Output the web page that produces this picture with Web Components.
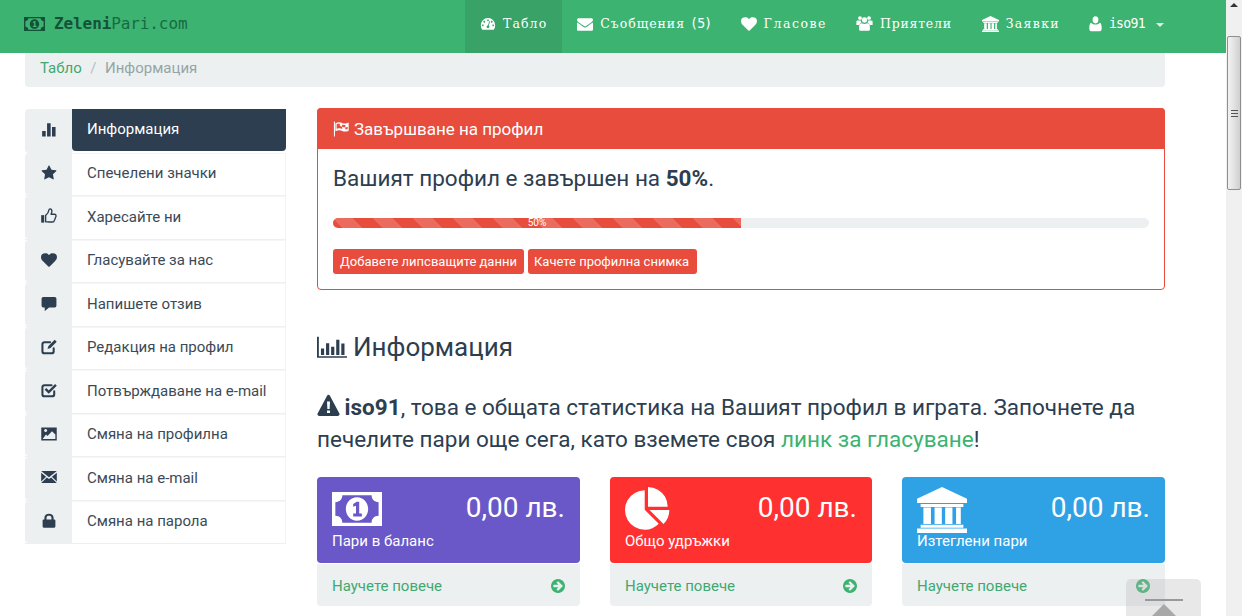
<!DOCTYPE html>
<html lang="bg"><head><meta charset="utf-8"><title>ZeleniPari</title>
<style>
html,body{margin:0;padding:0;height:616px;overflow:hidden;background:#fff}
body{font-family:Roboto,"Liberation Sans",sans-serif;color:#2c3e50}
</style></head><body>
<zp-app>
  <zp-navbar slot="nav"></zp-navbar>
  <zp-breadcrumb></zp-breadcrumb>
  <zp-layout>
    <zp-sidebar slot="side">
      <zp-side-item icon="bars" active>Информация</zp-side-item>
      <zp-side-item icon="star">Спечелени значки</zp-side-item>
      <zp-side-item icon="thumb">Харесайте ни</zp-side-item>
      <zp-side-item icon="heart">Гласувайте за нас</zp-side-item>
      <zp-side-item icon="comment">Напишете отзив</zp-side-item>
      <zp-side-item icon="edit">Редакция на профил</zp-side-item>
      <zp-side-item icon="check">Потвърждаване на e-mail</zp-side-item>
      <zp-side-item icon="picture">Смяна на профилна</zp-side-item>
      <zp-side-item icon="mail">Смяна на e-mail</zp-side-item>
      <zp-side-item icon="lock">Смяна на парола</zp-side-item>
    </zp-sidebar>
    <zp-profile-panel></zp-profile-panel>
    <zp-heading></zp-heading>
    <zp-intro></zp-intro>
    <zp-stats>
      <zp-stat-card color="#6a58c8" icon="money" iw="50" ih="34" it="5" label="Пари в баланс"></zp-stat-card>
      <zp-stat-card color="#ff3030" icon="pie" iw="46" ih="46" it="0" label="Общо удръжки"></zp-stat-card>
      <zp-stat-card color="#2fa2e6" icon="bank" iw="50" ih="46" it="0" label="Изтеглени пари"></zp-stat-card>
    </zp-stats>
  </zp-layout>
  <zp-scrollbar slot="bar"></zp-scrollbar>
  <zp-backtop slot="over"></zp-backtop>
</zp-app>
<script>
const ICONS={
 gauge:`<path fill-rule="evenodd" d="M896 224C452 224 96 600 96 1050c0 170 50 330 140 466 12 18 30 28 52 28h1216c22 0 40-10 52-28 90-136 140-296 140-466 0-450-356-826-800-826zM896 384a96 96 0 1 1-.1 0zM480 544a96 96 0 1 1-.1 0zM320 960a96 96 0 1 1-.1 0zM1472 960a96 96 0 1 1-.1 0zM1312 544a96 96 0 1 1-.1 0zM1130 620l-150 440c50 40 72 90 72 140 0 90-70 160-156 160s-156-70-156-160c0-86 66-156 150-160l152-448z"/>`,
 envelope:`<path d="M1792 710v794q0 66-47 113t-113 47h-1472q-66 0-113-47t-47-113v-794q44 49 101 87 362 246 497 345 57 42 92.5 65.5t94.5 48 110 24.5h2q51 0 110-24.5t94.5-48 92.5-65.5q170-123 498-345 57-39 100-87zm0-294q0 79-49 151t-122 123q-376 261-468 325-10 7-42.5 30.5t-54 38-52 32.5-57.5 27-50 9h-2q-23 0-50-9t-57.5-27-52-32.5-54-38-42.5-30.5q-91-64-262-182.5t-205-142.5q-62-42-117-115.5t-55-136.5q0-78 41.5-130t118.5-52h1472q65 0 112.5 47t47.5 113z"/>`,
 heart:`<path d="M896 1664q-26 0-44-18l-624-602q-10-8-27.5-26t-55.5-65.5-68-97.5-53.5-121-23.5-138q0-220 127-344t351-124q62 0 126.5 21.5t120 58 95.5 68.5 76 68q36-36 76-68t95.5-68.5 120-58 126.5-21.5q224 0 351 124t127 344q0 221-229 450l-623 600q-18 18-44 18z"/>`,
 users:`<rect x="230" y="130" width="380" height="380" rx="170"/><rect x="1182" y="130" width="380" height="380" rx="170"/><rect x="620" y="250" width="552" height="560" rx="260"/><path d="M40 1050V720q0-130 130-130h320q10 110 90 210-180 60-240 250zM1752 1050V720q0-130-130-130h-320q-10 110-90 210 180 60 240 250z"/><path d="M330 1540v-340c0-210 130-320 300-320 70 50 170 70 266 70s196-20 266-70c170 0 300 110 300 320v340q0 130-130 130H460q-130 0-130-130z"/>`,
 bank:`<path d="M896 128 1792 528v140H0V528z"/><path d="M130 700h1532v100H130z"/><path d="M230 820h270v560H230zM630 820h260v560H630zM1010 820h260v560h-260zM1400 820h170v560h-170z"/><path d="M130 1400h1532v100H130zM0 1530h1792v150H0z"/>`,
 user:`<circle cx="896" cy="430" r="400"/><path d="M300 760c120 130 280 200 596 200s476-70 596-200c180 40 260 280 260 620 0 220-90 340-260 340H300c-170 0-260-120-260-340 0-340 80-580 260-620z"/>`,
 bars:`<path d="M128 1000h400v620H128zM680 128h400v1492H680zM1232 560h400v1060h-400z"/>`,
 chart:`<path d="M0 192h110v1340h1682v110H0z"/><path d="M256 1000h190v440H256zM560 640h190v800H560zM864 880h190v560H864zM1168 400h190v1040h-190zM1472 660h190v780h-190z" transform="translate(-20 0)"/>`,
 star:`<path d="M1728 647q0 22-26 48l-363 354 86 500q1 7 1 20 0 21-10.5 35.5t-30.5 14.5q-19 0-40-12l-449-236-449 236q-22 12-40 12-21 0-31.5-14.5t-10.5-35.5q0-6 2-20l86-500-364-354q-25-27-25-48 0-37 56-46l502-73 225-455q19-41 49-41t49 41l225 455 502 73q56 9 56 46z"/>`,
 thumb:`<path d="M20 800h340v840H20z"/><path fill="none" stroke="currentColor" stroke-width="150" stroke-linejoin="round" d="M520 1540V830c170-110 330-340 370-610 10-70 50-120 120-120 130 0 210 130 210 260 0 130-60 240-100 340h370c120 0 200 70 200 190 0 60-30 120-70 150 20 70 0 140-60 180 10 80-20 140-80 180 0 100-90 170-200 170H890c-110 0-260-20-370-20z"/>`,
 comment:`<path d="M256 224h1280q192 0 192 190v800q0 190-192 190H900l-480 400v-400H256q-192 0-192-190V414q0-190 192-190z"/>`,
 edit:`<path fill="none" stroke="currentColor" stroke-width="230" stroke-linejoin="round" stroke-linecap="round" d="M1420 1040v320q0 240-240 240H400q-240 0-240-240V600q0-240 240-240h620"/><path d="M1530 90l230 230-690 690-340 100 100-340z"/>`,
 check:`<path fill="none" stroke="currentColor" stroke-width="230" stroke-linejoin="round" stroke-linecap="round" d="M1480 1040v320q0 240-240 240H400q-240 0-240-240V600q0-240 240-240h780"/><path fill="none" stroke="currentColor" stroke-width="270" d="M500 760l370 370 800-800"/>`,
 picture:`<path fill-rule="evenodd" d="M30 180h1732v1432H30zM520 330a170 170 0 1 0 .1 0zM180 1460h1430V950l-380-360-500 540-170-170z"/>`,
 mail:`<path d="M20 230h1752L896 930zM20 420v970l550-510zM1772 420v970l-550-510zM660 950l236 180 236-180 640 610H20z"/>`,
 lock:`<path fill-rule="evenodd" d="M380 720V520C380 230 620 80 896 80s516 150 516 440v200h70q130 0 130 130v660q0 130-130 130H310q-130 0-130-130V850q0-130 130-130zM620 720h552V520c0-130-120-200-276-200S620 390 620 520z"/>`,
 flag:`<path d="M190 160h110v1480H190z"/><path fill-rule="evenodd" d="M340 330c260-150 480-130 680-40 200 90 340 90 640-30v800c-300 120-440 120-640 30-200-90-420-110-680 40zM460 420v220c120-60 220-60 320-40V380c-110-20-210-10-320 40zM780 600v230c80 10 150 40 230 70V680c-80-30-150-70-230-80zM1010 440v240c120 50 240 60 320 40V490c-100 10-210-10-320-50zM1330 720v230c90-10 170-40 230-60V660c-70 30-150 50-230 60zM460 640v240c100-50 210-70 320-50V600c-110-10-220-20-320 40z"/>`,
 warn:`<path fill-rule="evenodd" d="M896 128c50 0 90 30 110 70l740 1340c40 80-10 170-110 170H156c-100 0-150-90-110-170L786 198c20-40 60-70 110-70zM780 640l30 560h172l30-560zM780 1300v190h232v-190z"/>`,
 money:`<path fill-rule="evenodd" d="M0 0h1792v1240H0zM120 370v500c150 0 250 100 250 250h1050c0-150 100-250 250-250V370c-150 0-250-100-250-250H370c0 150-100 250-250 250zM896 190c230 0 400 200 400 430s-170 430-400 430-400-200-400-430 170-430 400-430zM760 780v110h310V780h-95V360h-90L760 440v100l100-40v280z"/>`,
 pie:`<path d="M768 890l546 546q-106 108-247.5 168t-298.5 60q-209 0-385.5-103t-279.5-279.5-103-385.5 103-385.5 279.5-279.5 385.5-103v762zm187 6h773q0 157-60 298.5t-168 247.5zm709-128h-768v-768q209 0 385.5 103t279.5 279.5 103 385.5z"/>`,
 arrow:`<path d="M1285 896q0-27-18-45l-91-91-362-362q-18-18-45-18t-45 18l-91 91q-18 18-18 45t18 45l189 189h-502q-26 0-45 19t-19 45v128q0 26 19 45t45 19h502l-189 189q-19 19-19 45t19 45l91 91q18 18 45 18t45-18l362-362 91-91q18-18 18-45zm251 0q0 209-103 385.5t-279.5 279.5-385.5 103-385.5-103-279.5-279.5-103-385.5 103-385.5 279.5-279.5 385.5-103 385.5 103 279.5 279.5 103 385.5z"/>`
};
function def(name,html,extra){
  const t=document.createElement('template');t.innerHTML=html;
  customElements.define(name,class extends HTMLElement{
    constructor(){super();this.attachShadow({mode:'open'}).appendChild(t.content.cloneNode(true));}
    connectedCallback(){extra&&extra.call(this,this.shadowRoot);}
  });
}
class ZpIcon extends HTMLElement{
  constructor(){super();this.attachShadow({mode:'open'});}
  connectedCallback(){
    const w=this.getAttribute('w')||this.getAttribute('s')||16,h=this.getAttribute('h')||this.getAttribute('s')||16;
    const n=this.getAttribute('name');
    const vb=n==='money'?'0 0 1792 1240':n==='bank'?'0 128 1792 1552':n==='arrow'?'0 128 1536 1536':'0 0 1792 1792';
    this.shadowRoot.innerHTML=`<style>:host{display:inline-flex;flex:none;line-height:0}svg{display:block;fill:currentColor}</style><svg width="${w}" height="${h}" viewBox="${vb}" aria-hidden="true" preserveAspectRatio="none">${ICONS[n]||''}</svg>`;
  }
}
customElements.define('zp-icon',ZpIcon);

def('zp-app',`<style>
:host{display:flex;width:1242px;height:616px;overflow:hidden;position:relative}
.main{width:1226px;flex:none;display:flex;flex-direction:column}
</style><div class="main"><slot name="nav"></slot><slot></slot></div><slot name="bar"></slot><slot name="over"></slot>`);

def('zp-nav-item',`<style>
:host{display:flex;align-items:center;gap:7px;height:53px;padding:0 15px 6px;color:#fff;box-sizing:border-box;font:12.5px "DejaVu Serif",serif;white-space:nowrap}
:host([active]){background:#38a267}
</style><slot name="i"></slot><slot></slot>`);

def('zp-navbar',`<style>
:host{display:flex;height:53px;background:#3cb371;flex:none;box-sizing:border-box;padding-left:24px;align-items:stretch}
.brand{display:flex;align-items:center;gap:9px;color:#176a44;font:16px "DejaVu Sans Mono",monospace;width:441px;flex:none;letter-spacing:-.1px;padding-bottom:6px;box-sizing:border-box}
.brand b{color:#135238}
nav{display:flex}
.lat{font:13.2px "DejaVu Sans Mono",monospace;letter-spacing:-.72px}
.caret{display:inline-block;width:0;height:0;border:4.5px solid transparent;border-top-color:#dff3e7;border-bottom:0;margin:2px 0 0 4px}
</style>
<div class="brand"><zp-icon name="money" w="21" h="14" style="color:#135238"></zp-icon><span><b>Zeleni</b>Pari.com</span></div>
<nav>
<zp-nav-item active style="letter-spacing:1.1px"><zp-icon slot="i" name="gauge" s="16"></zp-icon><span>Табло</span></zp-nav-item>
<zp-nav-item style="letter-spacing:.95px;padding-right:14px"><zp-icon slot="i" name="envelope" s="16"></zp-icon><span>Съобщения <span class="lat">(5)</span></span></zp-nav-item>
<zp-nav-item style="letter-spacing:1.55px;padding-right:14px"><zp-icon slot="i" name="heart" s="16"></zp-icon><span>Гласове</span></zp-nav-item>
<zp-nav-item style="letter-spacing:.75px"><zp-icon slot="i" name="users" s="17"></zp-icon><span>Приятели</span></zp-nav-item>
<zp-nav-item style="letter-spacing:1.3px;padding-right:14px"><zp-icon slot="i" name="bank" w="17" h="16"></zp-icon><span>Заявки</span></zp-nav-item>
<zp-nav-item><zp-icon slot="i" name="user" w="13" h="16"></zp-icon><span class="lat">iso91</span><span class="caret"></span></zp-nav-item>
</nav>`);

def('zp-breadcrumb',`<style>
:host{display:flex;align-items:center;margin-left:25px;width:1140px;height:34px;flex:none;box-sizing:border-box;padding:0 15px 5px;background:#ecf0f1;border-radius:0 0 4px 4px;font-size:15px;color:#95a5a6}
a{color:#41a872;text-decoration:none}
i{font-style:normal;padding:0 8.5px;color:#b4c0c1}
</style><a href="#">Табло</a><i>/</i><span>Информация</span>`);

def('zp-layout',`<style>
:host{display:grid;grid-template-columns:261px 848px;column-gap:31px;padding:21px 0 0 25px;align-items:start}
.side{grid-row:1}
.main{grid-row:1;display:flow-root}
</style><div class="side"><slot name="side"></slot></div><div class="main"><slot></slot></div>`);

def('zp-sidebar',`<style>:host{display:flex;flex-direction:column;margin-top:1px}</style><slot></slot>`);

class SideItem extends HTMLElement{
  constructor(){super();this.attachShadow({mode:'open'});}
  connectedCallback(){
    this.shadowRoot.innerHTML=`<style>
:host{display:flex;height:43.5px;box-sizing:border-box;font-size:15px;color:#3b4a56;border-bottom:1px solid #ecf0f1}
.ic{width:47px;flex:none;background:#ecf0f1;display:flex;align-items:center;justify-content:center;color:#2c3e50;border-radius:4px 0 0 4px;padding-bottom:2px;box-sizing:border-box}
.tx{flex:1;display:flex;align-items:center;padding:0 0 2px 15px;border-right:1px solid #f1f4f5;border-top:1px solid #f4f6f7}
:host([active]){border-bottom:0}
:host([active]) .tx{background:#2c3e50;color:#fff;border:0;border-radius:0 0 4px 4px;height:42px;box-sizing:border-box}
</style><div class="ic"><zp-icon name="${this.getAttribute('icon')}" s="16"></zp-icon></div><div class="tx"><slot></slot></div>`;
  }
}
customElements.define('zp-side-item',SideItem);

def('zp-profile-panel',`<style>
:host{display:block;height:182px;box-sizing:border-box;border:1px solid #e74c3c;border-radius:4px}
.hd{height:41px;background:#e74c3c;color:#fff;font-size:17px;display:flex;align-items:center;gap:4px;padding:0 15px;margin:-1px -1px 0;border-radius:4px 4px 0 0}
h3{margin:0;padding:16px 15px 0;font-size:22.5px;font-weight:400;line-height:26px;color:#2c3e50}
h3 b{font-weight:700}
.pg{margin:27px 15px 0;height:10px;background:#ecf0f1;border-radius:5px;overflow:hidden}
.fill{width:50%;height:100%;color:#fff;font-size:10px;line-height:10px;text-align:center;background-color:#e74c3c;background-image:linear-gradient(45deg,rgba(255,255,255,.18) 25%,transparent 25%,transparent 50%,rgba(255,255,255,.18) 50%,rgba(255,255,255,.18) 75%,transparent 75%,transparent);background-size:40px 40px}
.btns{display:flex;gap:4px;padding:21px 15px 0}
.btn{background:#e74c3c;color:#fff;font-size:13px;line-height:25px;height:25px;padding:0 7px;border-radius:3px;white-space:nowrap}
.btn+.btn{padding:0 8px 0 6px}
</style>
<div class="hd"><zp-icon name="flag" s="18"></zp-icon><span>Завършване на профил</span></div>
<h3>Вашият профил е завършен на <b>50%</b>.</h3>
<div class="pg"><div class="fill">50%</div></div>
<div class="btns"><span class="btn">Добавете липсващите данни</span><span class="btn">Качете профилна снимка</span></div>`);

def('zp-heading',`<style>
:host{display:flex;align-items:center;gap:6px;margin-top:40px;height:34px;font-size:26px;font-weight:400;color:#2c3e50}
</style><zp-icon name="chart" w="30" h="26"></zp-icon><span>Информация</span>`);

def('zp-intro',`<style>
:host{display:block;margin-top:27px;font-size:22.5px;line-height:32px;color:#2c3e50}
a{color:#3cb371;text-decoration:none}
b{font-weight:700;margin-left:-1px}
zp-icon{vertical-align:-2px}
</style><zp-icon name="warn" w="23" h="24"></zp-icon> <b>iso91</b>, това е общата статистика на Вашият профил в играта. Започнете да печелите пари още сега, като вземете своя <a href="#">линк за гласуване</a>!`);

def('zp-stats',`<style>:host{display:grid;grid-template-columns:263px 262px 263px;column-gap:30px;margin-top:22px}</style><slot></slot>`);

class StatCard extends HTMLElement{
  constructor(){super();this.attachShadow({mode:'open'});}
  connectedCallback(){
    const a=n=>this.getAttribute(n);
    this.shadowRoot.innerHTML=`<style>
:host{display:block}
.top{height:86px;box-sizing:border-box;background:${a('color')};color:#fff;border-radius:4px;padding:10px 15px 0}
.row{display:flex;justify-content:space-between;height:46px;align-items:flex-start}
.num{font-size:28px;line-height:42px;font-weight:400}
.lb{font-size:15px;line-height:20px;margin-top:-2px}
.ft{height:42px;margin-top:1px;box-sizing:border-box;background:#ecf0f1;border-radius:0 0 4px 4px;display:flex;align-items:center;justify-content:space-between;padding:1px 15px 0;color:#41a872;font-size:15px}
.ft zp-icon{color:#3cb371}
.ic{margin-top:${a('it')}px;display:block}
</style><div class="top"><div class="row"><zp-icon class="ic" name="${a('icon')}" w="${a('iw')}" h="${a('ih')}"></zp-icon><div class="num">0,00 лв.</div></div><div class="lb">${a('label')}</div></div>
<div class="ft"><span>Научете повече</span><zp-icon name="arrow" s="14"></zp-icon></div>`;
  }
}
customElements.define('zp-stat-card',StatCard);

def('zp-scrollbar',`<style>
:host{display:flex;flex-direction:column;width:16px;flex:none;height:616px;background:#f0f0f0;box-sizing:border-box;padding:0 1px}
.up{height:36px;display:flex;justify-content:center;padding-top:3px;box-sizing:border-box}
.up i{width:0;height:0;border:4px solid transparent;border-bottom-color:#333;border-top:0;display:block}
.th{height:154px;box-sizing:border-box;border:1px solid #8f8f8f;border-radius:2px;background:linear-gradient(90deg,#f2f2f2,#e2e2e2 50%,#cfcfcf);display:flex;align-items:center;justify-content:center}
.gr{width:7px;height:7px;background:repeating-linear-gradient(#555 0 1px,transparent 1px 3px)}
</style><div class="up"><i></i></div><div class="th"><div class="gr"></div></div>`);

def('zp-backtop',`<style>
:host{position:absolute;left:1126px;top:579px;width:75px;height:37px;background:rgba(180,180,180,.3);border-radius:5px 5px 0 0;overflow:hidden}
.l{position:absolute;left:19px;top:20px;width:38px;height:2px;background:#999}
.t{position:absolute;left:20px;top:25px;width:0;height:0;border:18px solid transparent;border-bottom-color:#a8a8a8;border-top:0}
</style><div class="l"></div><div class="t"></div>`);
</script>
</body></html>
